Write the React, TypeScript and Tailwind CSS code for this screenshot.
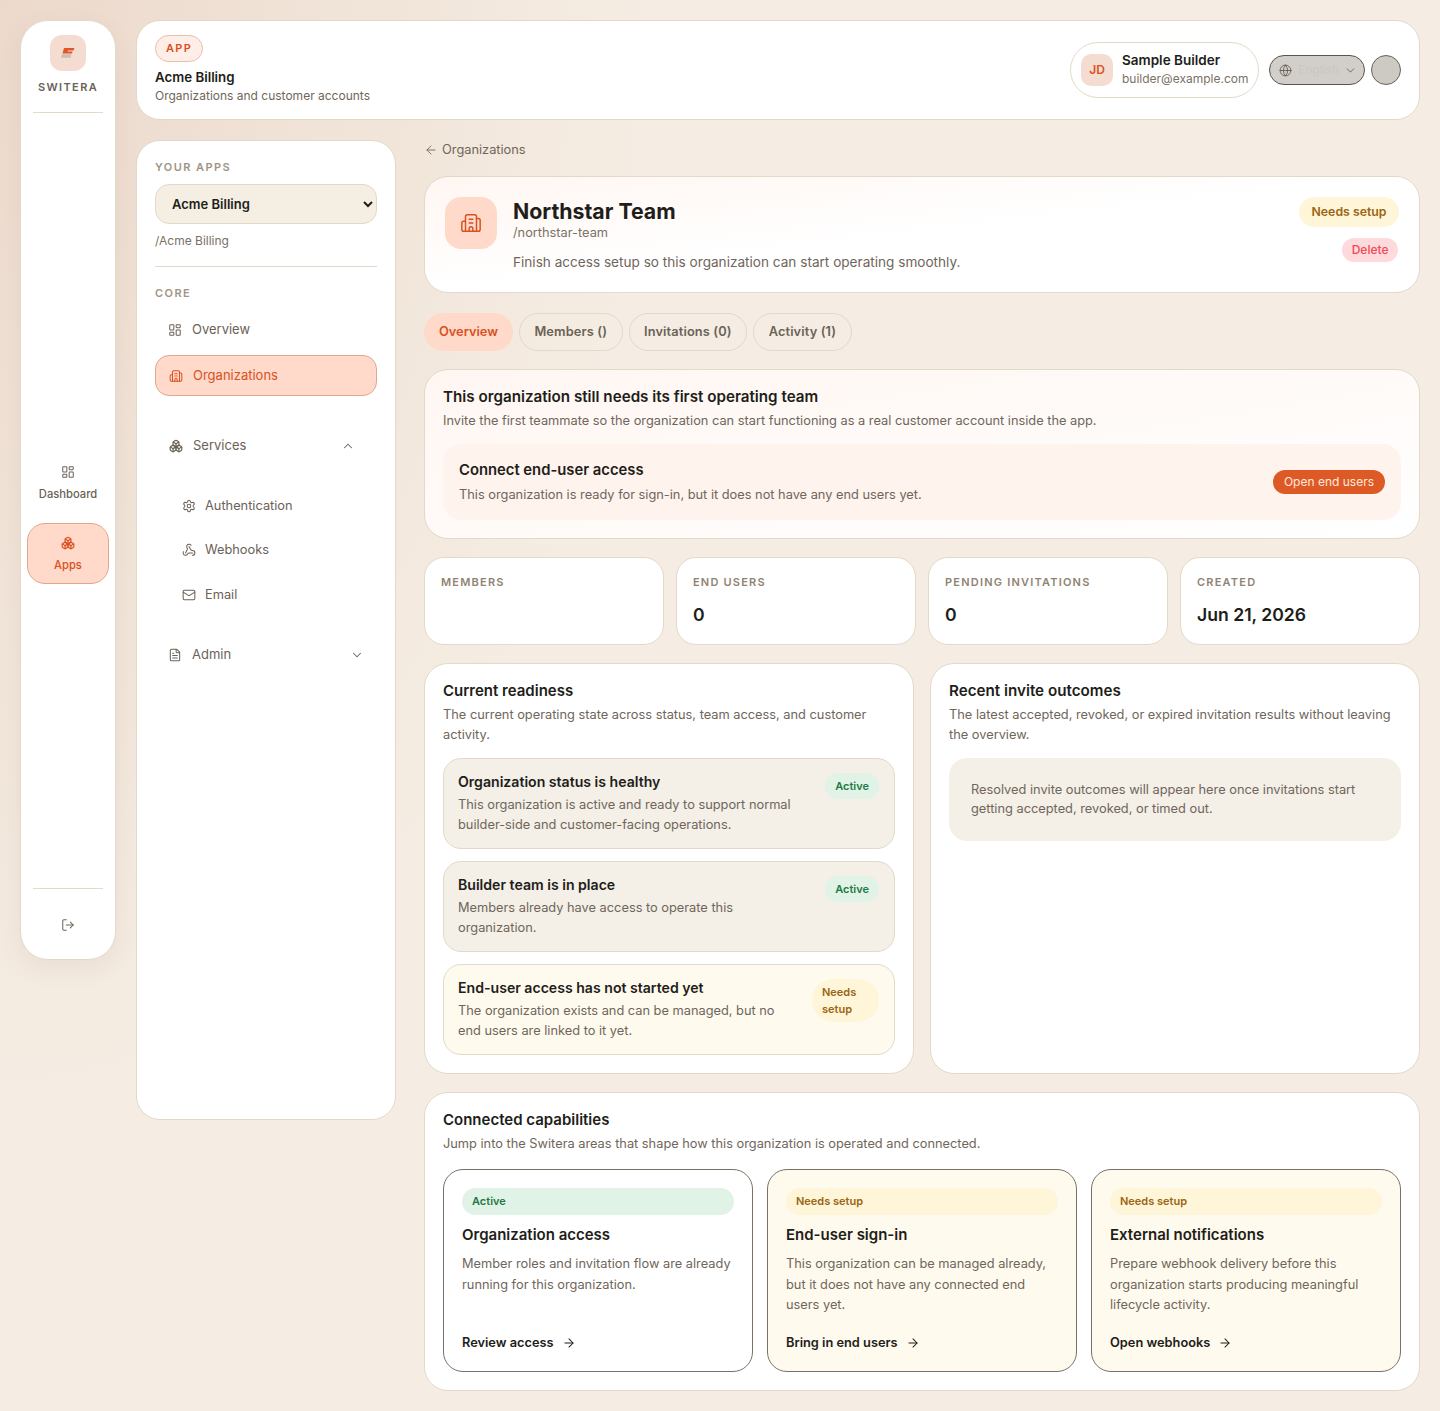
import {
  ArrowLeft,
  ArrowRight,
  Boxes,
  Building2,
  ChevronDown,
  ChevronUp,
  FileText,
  Globe,
  LayoutDashboard,
  LogOut,
  Mail,
  Settings,
  Webhook,
} from "lucide-react";
import type { ReactNode } from "react";

const BORDER = "border border-[#e3d9c8]";

function Tone({ tone, children, className = "" }: { tone: "active" | "setup"; children: ReactNode; className?: string }) {
  const color = tone === "active" ? "bg-[#e0f3e6] text-[#1f7a45]" : "bg-[#fff5d9] text-[#9a6512]";
  return <span className={`rounded-full font-semibold ${color} ${className}`}>{children}</span>;
}

function Rail() {
  return (
    <aside className={`w-[96px] h-[940px] shrink-0 rounded-[28px] bg-white ${BORDER} shadow-[0_8px_24px_rgba(120,90,60,0.08)] flex flex-col items-center`}>
      <div className="mt-[14px] w-9 h-9 rounded-[12px] bg-[#f5dcd1] flex items-center justify-center">
        <svg width="14" height="10" viewBox="0 0 14 10">
          <path d="M3 0H13.500L12.500 2.500H7L6.500 3.500H11.500L11 5.500H1.500Z" fill="#e0562a" />
          <path d="M1 6.200H10.500L9.500 9.800H0Z" fill="#c9bfb2" />
        </svg>
      </div>
      <div className="mt-2 text-[11px] leading-4 font-semibold tracking-[0.125em] text-[#6b6257]">SWITERA</div>
      <div className="mt-[17px] w-[70px] h-px bg-[#e3d9c8]" />
      <div className="flex-1 flex flex-col items-center justify-center w-full pt-[36px]">
        <div className="h-[60px] w-[82px] flex flex-col items-center justify-center gap-[7px] text-[#6b6257]">
          <LayoutDashboard size={14} strokeWidth={1.75} />
          <span className="text-[11.200px] leading-4 font-medium">Dashboard</span>
        </div>
        <div className="mt-[9px] h-[61px] w-[82px] rounded-[18px] bg-[#ffd9ca] border border-[#e2a68c] pt-[2px] flex flex-col items-center justify-center gap-[7px] text-[#d9511f]">
          <Boxes size={14} strokeWidth={2} />
          <span className="text-[11.200px] leading-4 font-medium">Apps</span>
        </div>
      </div>
      <div className="w-[70px] h-px bg-[#e3d9c8]" />
      <div className="h-[70px] pt-[2px] flex items-center text-[#6b6257]">
        <LogOut size={14} strokeWidth={1.75} />
      </div>
    </aside>
  );
}

function Header() {
  return (
    <header className={`h-[100px] rounded-[24px] bg-white ${BORDER} pl-[18px] pr-[18px] flex items-center justify-between`}>
      <div className="pb-px">
        <span className="inline-block h-[27px] px-[10px] rounded-full bg-[#ffeee7] border border-[#e8bfa9] text-[11px] leading-[25px] font-semibold tracking-[0.12em] text-[#d9511f]">APP</span>
        <div className="mt-[6px] text-[13.300px] leading-[18px] font-semibold text-[#211d19]">Acme Billing</div>
        <div className="mt-px text-xs leading-[18px] text-[#6f665b]">Organizations and customer accounts</div>
      </div>
      <div className="flex items-center">
        <div className={`h-14 w-[189px] rounded-full ${BORDER} flex items-center pl-[10px] gap-[9px]`}>
          <div className="w-8 h-8 rounded-[10px] bg-[#f5dcd1] text-[#d9511f] text-xs font-semibold flex items-center justify-center">JD</div>
          <div>
            <div className="text-[13.500px] leading-[18px] font-semibold text-[#211d19]">Sample Builder</div>
            <div className="text-xs leading-[20px] text-[#7a7166]">builder@example.com</div>
          </div>
        </div>
        <div className="ml-[10px] h-[30px] w-[96px] rounded-full bg-[#d2cec9] border border-[#5c5349] flex items-center pl-[9px] pr-[7px] text-[#5c5349]">
          <Globe size={13} strokeWidth={1.5} />
          <span className="ml-[6px] text-xs text-[#cbc7c2]">English</span>
          <ChevronDown size={13} strokeWidth={1.5} className="ml-auto" />
        </div>
        <div className="ml-[6px] w-[30px] h-[30px] rounded-full bg-[#cdc9c3] border border-[#6b6257]" />
      </div>
    </header>
  );
}

function NavItem({ icon, label, active, className = "" }: { icon: ReactNode; label: string; active?: boolean; className?: string }) {
  return (
    <div className={`rounded-[14px] pl-[13px] flex items-center gap-[10px] text-[13px] ${active ? "h-[41px] bg-[#ffd9ca] border border-[#e2a68c] text-[#d9511f]" : "h-10 text-[#6b6257]"} ${className}`}>
      {icon}
      <span>{label}</span>
    </div>
  );
}

function SubItem({ icon, label, className = "" }: { icon: ReactNode; label: string; className?: string }) {
  return (
    <div className={`pl-[27px] flex items-center gap-[9px] h-5 text-[12.800px] text-[#6b6257] ${className}`}>
      {icon}
      {label}
    </div>
  );
}

function Sidebar() {
  return (
    <aside className={`w-[260px] h-[980px] shrink-0 rounded-[24px] bg-white ${BORDER} px-[18px] pt-5`}>
      <div className="text-[11px] leading-[13px] font-semibold tracking-[0.13em] text-[#a09585]">YOUR APPS</div>
      <select defaultValue="acme" className={`mt-[10px] w-full h-10 rounded-[14px] bg-[#f5eee3] ${BORDER} pl-3 text-[13px] font-semibold text-[#211d19]`}>
        <option value="acme">Acme Billing</option>
      </select>
      <div className="mt-[9px] text-xs leading-4 text-[#7a7166]">/Acme Billing</div>
      <div className="mt-[17px] h-px bg-[#e3d9c8]" />
      <div className="mt-5 text-[11px] leading-[13px] font-semibold tracking-[0.13em] text-[#a09585]">CORE</div>
      <NavItem className="mt-[10px]" icon={<LayoutDashboard size={14} strokeWidth={1.75} />} label="Overview" />
      <NavItem className="mt-[5px]" active icon={<Building2 size={14} strokeWidth={1.75} />} label="Organizations" />
      <div className="mt-[40px] h-5 pl-[14px] pr-[22px] flex items-center text-[13px] text-[#6b6257]">
        <Boxes size={14} strokeWidth={2} />
        <span className="ml-[10px]">Services</span>
        <ChevronUp size={14} strokeWidth={1.75} className="ml-auto" />
      </div>
      <SubItem className="mt-[40px]" icon={<Settings size={14} strokeWidth={1.75} />} label="Authentication" />
      <SubItem className="mt-[24px]" icon={<Webhook size={14} strokeWidth={1.75} />} label="Webhooks" />
      <SubItem className="mt-[25px]" icon={<Mail size={14} strokeWidth={1.75} />} label="Email" />
      <div className="mt-[40px] h-5 pl-[13px] pr-[13px] flex items-center gap-[10px] text-[13px] text-[#6b6257]">
        <FileText size={14} strokeWidth={1.75} />
        <span>Admin</span>
        <ChevronDown size={14} strokeWidth={1.75} className="ml-auto" />
      </div>
    </aside>
  );
}

function HeroCard() {
  return (
    <section className={`mt-[16px] h-[117px] rounded-[24px] ${BORDER} bg-gradient-to-br from-[#fff6f2] via-white to-white pl-5 pr-5 pt-5 flex`}>
      <div className="w-[52px] h-[52px] rounded-[16px] bg-[#ffd9ca] text-[#d9511f] flex items-center justify-center">
        <Building2 size={22} strokeWidth={1.6} />
      </div>
      <div className="ml-4 flex-1">
        <div className="text-[21.300px] leading-7 font-bold text-[#211d19]">Northstar Team</div>
        <div className="text-[12.800px] leading-[16px] text-[#7a7166]">/northstar-team</div>
        <div className="mt-[11px] text-[13.600px] leading-5 text-[#6f665b]">Finish access setup so this organization can start operating smoothly.</div>
      </div>
      <div className="flex flex-col items-end">
        <Tone tone="setup" className="h-[30px] px-[12.500px] text-[12.300px] leading-[30px]">Needs setup</Tone>
        <span className="mt-[11px] mr-px h-6 px-[9.500px] rounded-full bg-[#ffdadd] text-[#ef4a55] text-xs leading-6 font-medium">Delete</span>
      </div>
    </section>
  );
}

function Tabs() {
  const tabs = ["Members ()", "Invitations (0)", "Activity (1)"];
  return (
    <div className="mt-5 flex gap-[6px] text-[12.800px] font-semibold">
      <span className="h-[38px] px-[15px] rounded-full bg-[#ffd9ca] text-[#d9511f] leading-[38px]">Overview</span>
      {tabs.map((tab) => (
        <span key={tab} className={`h-[38px] px-[14.500px] rounded-full ${BORDER} text-[#6b6257] leading-[36px] tracking-[0.01em]`}>{tab}</span>
      ))}
    </div>
  );
}

function SetupPanel() {
  return (
    <section className={`mt-[18px] h-[170px] rounded-[24px] ${BORDER} bg-gradient-to-br from-[#fff6f2] to-white px-[18px] pt-[17px]`}>
      <div className="text-[15.200px] leading-5 font-semibold text-[#211d19]">This organization still needs its first operating team</div>
      <div className="mt-[4px] text-[12.800px] leading-5 text-[#6f665b]">Invite the first teammate so the organization can start functioning as a real customer account inside the app.</div>
      <div className="mt-[13px] h-[76px] rounded-[18px] bg-[#fff3ee] pl-4 pr-4 flex items-center justify-between">
        <div className="pt-px">
          <div className="text-[14.800px] leading-5 font-semibold text-[#211d19]">Connect end-user access</div>
          <div className="mt-[5px] text-[12.800px] leading-5 text-[#6f665b]">This organization is ready for sign-in, but it does not have any end users yet.</div>
        </div>
        <span className="h-6 px-[11px] rounded-full bg-[#dd5a26] text-[#ffe9df] text-xs leading-6">Open end users</span>
      </div>
    </section>
  );
}

function Stat({ label, value }: { label: string; value?: string }) {
  return (
    <div className={`h-[88px] rounded-[20px] bg-white ${BORDER} px-4 pt-[18px]`}>
      <div className="text-[11px] leading-[13px] font-semibold tracking-[0.11em] text-[#8f8473]">{label}</div>
      <div className="mt-[12px] text-[17.600px] leading-7 font-semibold text-[#211d19]">{value}</div>
    </div>
  );
}

function ReadinessRow({ title, body, tone, badge }: { title: string; body: ReactNode; tone: "active" | "setup"; badge: ReactNode }) {
  return (
    <div className={`h-[91px] rounded-[18px] ${BORDER} ${tone === "active" ? "bg-[#f4efe7]" : "bg-[#fffaee]"} pl-[14px] pr-[15px] pt-[14px] flex justify-between`}>
      <div className="pt-px">
        <div className="text-[14.100px] leading-[16px] font-semibold text-[#211d19]">{title}</div>
        <div className="mt-[5px] text-[12.800px] leading-[20px] text-[#6f665b]">{body}</div>
      </div>
      {badge}
    </div>
  );
}

function Readiness() {
  const active = <Tone tone="active" className="h-[26px] px-[10px] text-[11px] leading-[26px]">Active</Tone>;
  return (
    <section className={`h-[411px] rounded-[24px] bg-white ${BORDER} px-[18px] pt-[17px]`}>
      <div className="text-[15px] leading-5 font-semibold text-[#211d19]">Current readiness</div>
      <div className="mt-[4px] text-[12.800px] leading-5 text-[#6f665b]">The current operating state across status, team access, and customer activity.</div>
      <div className="mt-[13px] flex flex-col gap-3">
        <ReadinessRow
          title="Organization status is healthy"
          tone="active"
          badge={active}
          body={<>This organization is active and ready to support normal<br />builder-side and customer-facing operations.</>}
        />
        <ReadinessRow
          title="Builder team is in place"
          tone="active"
          badge={active}
          body={<>Members already have access to operate this<br />organization.</>}
        />
        <ReadinessRow
          title="End-user access has not started yet"
          tone="setup"
          badge={<Tone tone="setup" className="h-[43px] w-[67px] pl-[10px] rounded-[22px] text-[11px] leading-[17px] pt-[5px]">Needs<br />setup</Tone>}
          body={<>The organization exists and can be managed, but no<br />end users are linked to it yet.</>}
        />
      </div>
    </section>
  );
}

function Outcomes() {
  return (
    <section className={`h-[411px] rounded-[24px] bg-white ${BORDER} px-[18px] pt-[17px]`}>
      <div className="text-[15.200px] leading-5 font-semibold text-[#211d19]">Recent invite outcomes</div>
      <div className="mt-[4px] text-[12.800px] leading-5 text-[#6f665b]">The latest accepted, revoked, or expired invitation results without leaving the overview.</div>
      <div className="mt-[13px] h-[83px] rounded-[18px] bg-[#f4efe7] px-[22px] pt-[22px] text-[12.800px] leading-[19px] text-[#6f665b]">
        Resolved invite outcomes will appear here once invitations start getting accepted, revoked, or timed out.
      </div>
    </section>
  );
}

function Capability({ tone, title, body, link }: { tone: "active" | "setup"; title: string; body: string; link: string }) {
  return (
    <div className={`h-[203px] rounded-[20px] border border-[#7a7166] ${tone === "active" ? "bg-white" : "bg-[#fffaee]"} px-[18px] pt-[18px] flex flex-col`}>
      <Tone tone={tone} className="h-[27px] px-[10px] text-[11px] leading-[27px]">{tone === "active" ? "Active" : "Needs setup"}</Tone>
      <div className="mt-[10px] text-[15px] leading-5 font-semibold text-[#211d19]">{title}</div>
      <div className="mt-[9px] text-[12.800px] leading-[20.500px] text-[#6f665b]">{body}</div>
      <div className="mt-auto mb-[18px] flex items-center gap-2 text-[12.800px] leading-5 font-semibold text-[#211d19]">
        {link}
        <ArrowRight size={14} strokeWidth={1.75} />
      </div>
    </div>
  );
}

function Capabilities() {
  return (
    <section className={`mt-[18px] h-[299px] rounded-[24px] bg-white ${BORDER} px-[18px] pt-[17px]`}>
      <div className="text-[15px] leading-5 font-semibold text-[#211d19]">Connected capabilities</div>
      <div className="mt-[4px] text-[12.800px] leading-5 text-[#6f665b]">Jump into the Switera areas that shape how this organization is operated and connected.</div>
      <div className="mt-[15px] grid grid-cols-3 gap-[14px]">
        <Capability tone="active" title="Organization access" body="Member roles and invitation flow are already running for this organization." link="Review access" />
        <Capability tone="setup" title="End-user sign-in" body="This organization can be managed already, but it does not have any connected end users yet." link="Bring in end users" />
        <Capability tone="setup" title="External notifications" body="Prepare webhook delivery before this organization starts producing meaningful lifecycle activity." link="Open webhooks" />
      </div>
    </section>
  );
}

export default function App() {
  return (
    <div className="min-h-[1411px] bg-[#f5ede3] bg-[radial-gradient(ellipse_650px_1100px_at_0_0,#ecd9cb_0%,#f5ede3_100%)] p-5 flex gap-5 [font-family:Inter,sans-serif]">
      <Rail />
      <div className="flex-1 min-w-0">
        <Header />
        <div className="mt-5 flex gap-[28px]">
          <Sidebar />
          <main className="flex-1 min-w-0">
            <div className="h-5 flex items-center gap-[4px] text-[12.800px] text-[#6f665b]">
              <ArrowLeft size={14} strokeWidth={1.5} />
              Organizations
            </div>
            <HeroCard />
            <Tabs />
            <SetupPanel />
            <div className="mt-[18px] grid grid-cols-4 gap-3">
              <Stat label="MEMBERS" />
              <Stat label="END USERS" value="0" />
              <Stat label="PENDING INVITATIONS" value="0" />
              <Stat label="CREATED" value="Jun 21, 2026" />
            </div>
            <div className="mt-[18px] grid grid-cols-2 gap-4">
              <Readiness />
              <Outcomes />
            </div>
            <Capabilities />
          </main>
        </div>
      </div>
    </div>
  );
}
